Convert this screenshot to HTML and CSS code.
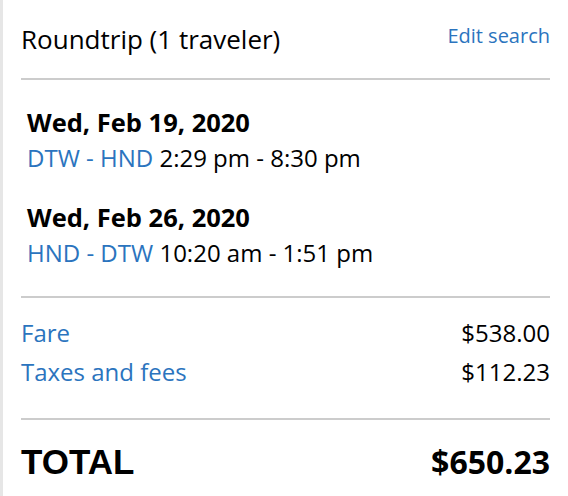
FILE: index.html
```html
<!DOCTYPE html>
<html>
<head>
<meta charset="utf-8">
<link rel="stylesheet" href="styles.css">
</head>
<body>
<div class="panel">
  <div class="header">
    <div class="title">Roundtrip (1 traveler)</div>
    <a class="edit" href="#">Edit search</a>
  </div>
  <div class="flights">
    <div class="flight">
      <div class="date">Wed, Feb 19, 2020</div>
      <div class="route"><span class="link">DTW - HND</span> 2:29 pm - 8:30 pm</div>
    </div>
    <div class="flight">
      <div class="date">Wed, Feb 26, 2020</div>
      <div class="route"><span class="link">HND - DTW</span> 10:20 am - 1:51 pm</div>
    </div>
  </div>
  <div class="costs">
    <div class="row"><span class="link">Fare</span><span>$538.00</span></div>
    <div class="row"><span class="link">Taxes and fees</span><span>$112.23</span></div>
  </div>
  <div class="total">
    <span class="total-label">TOTAL</span><span class="total-amount">$650.23</span>
  </div>
</div>
</body>
</html>
```
FILE: styles.css
```css
html, body {
  margin: 0;
  padding: 0;
  background: #fff;
}
body {
  font-family: "Open Sans", "Liberation Sans", sans-serif;
  color: #000;
  width: 568px;
  height: 496px;
  overflow: hidden;
}
.panel {
  border-left: 3px solid #e6e6e6;
  padding: 0 18px 0 18px;
  height: 496px;
  box-sizing: border-box;
}
.header {
  display: flex;
  justify-content: space-between;
  align-items: flex-start;
  padding-top: 21px;
  padding-bottom: 21px;
  border-bottom: 2px solid #cccccc;
}
.title {
  font-size: 26px;
  line-height: 36px;
}
.edit {
  font-size: 20px;
  line-height: 30px;
  color: #2b74be;
  text-decoration: none;
}
.link {
  color: #2b74be;
}
.flights {
  padding: 25px 0 26px 6px;
  border-bottom: 2px solid #cccccc;
}
.flight + .flight {
  margin-top: 25px;
}
.date {
  font-size: 25.5px;
  font-weight: 700;
  line-height: 34px;
}
.route {
  font-size: 24px;
  line-height: 34px;
  margin-top: 2px;
}
.costs {
  padding: 15px 0 27px;
  border-bottom: 2px solid #cccccc;
}
.row {
  display: flex;
  justify-content: space-between;
  font-size: 24px;
  line-height: 39px;
}
.total {
  display: flex;
  justify-content: space-between;
  align-items: baseline;
  font-weight: 700;
  padding-top: 18px;
  line-height: 48px;
}
.total-label {
  font-family: "Liberation Sans", Arial, sans-serif;
  font-size: 35px;
}
.total-amount {
  font-size: 32px;
}
```
